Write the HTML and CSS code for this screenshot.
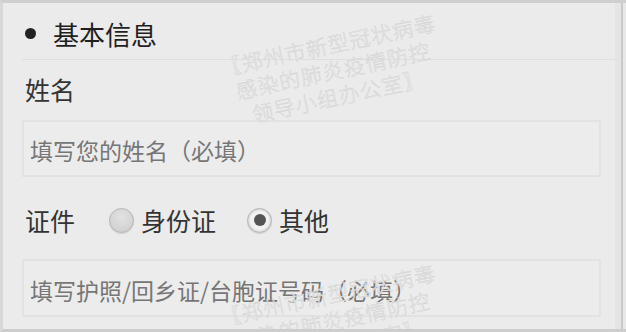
FILE: index.html
```html
<!DOCTYPE html>
<html lang="zh-CN">
<head>
<meta charset="utf-8">
<link rel="stylesheet" href="styles.css">
</head>
<body>
<div class="screen">
  <div class="section-head">
    <span class="bullet"></span>
    <span class="section-title">基本信息</span>
  </div>
  <div class="field-label">姓名</div>
  <div class="input-box"><span class="placeholder">填写您的姓名（必填）</span></div>
  <div class="radio-row">
    <span class="radio-label">证件</span>
    <span class="radio"></span>
    <span class="radio-text">身份证</span>
    <span class="radio checked"><span class="dot"></span></span>
    <span class="radio-text">其他</span>
  </div>
  <div class="input-box second"><span class="placeholder">填写护照/回乡证/台胞证号码（必填）</span></div>

  <div class="watermark wm-top">【郑州市新型冠状病毒<br>感染的肺炎疫情防控<br>领导小组办公室】</div>
  <div class="watermark wm-bottom">【郑州市新型冠状病毒<br>感染的肺炎疫情防控<br>领导小组办公室】</div>
</div>
</body>
</html>
```

FILE: styles.css
```css
html, body {
  margin: 0;
  padding: 0;
  background: #ebebeb;
}

.screen {
  position: relative;
  width: 626px;
  height: 332px;
  box-sizing: border-box;
  overflow: hidden;
  border-top: 3px solid #cfcfcf;
  border-left: 3px solid #d8d8d8;
  border-bottom: 3px solid #cdcdcd;
  padding-left: 19px;
  padding-right: 24px;
  background: linear-gradient(to right, #ebebeb 0, #ebebeb 612px, #e5e5e5 612px, #e5e5e5 618px, #c9c9c9 618px, #c9c9c9 620px, #e8e8e8 620px);
  font-family: "Noto Sans CJK SC", "Noto Sans", sans-serif;
}

.section-head {
  display: flex;
  align-items: center;
  height: 57px;
  box-sizing: border-box;
  padding-top: 14px;
  padding-bottom: 9px;
  border-bottom: 1px solid #dedede;
  margin-right: -20px;
}

.bullet {
  width: 11px;
  height: 11px;
  border-radius: 50%;
  background: #222;
  margin-left: 3px;
  margin-right: 17px;
}

.section-title {
  font-size: 26px;
  line-height: 34px;
  color: #1f1f1f;
}

.field-label {
  font-size: 25px;
  line-height: 34px;
  color: #333;
  padding-left: 3px;
  margin-top: 12px;
  margin-bottom: 14px;
}

.input-box {
  height: 57px;
  box-sizing: border-box;
  border: 2px solid #e2e2e2;
  background: #ececec;
  display: flex;
  align-items: center;
  padding-top: 3px;
  padding-left: 6px;
  margin-right: 1px;
}

.input-box.second {
  height: 58px;
  margin-top: 22px;
  padding-top: 4px;
}

.placeholder {
  font-size: 23px;
  line-height: 30px;
  color: #767676;
}

.radio-row {
  display: flex;
  align-items: center;
  height: 34px;
  margin-top: 26px;
  padding-left: 3px;
  font-size: 25px;
  line-height: 34px;
  color: #333;
}

.radio-label {
  margin-right: 34px;
}

.radio {
  width: 25px;
  height: 25px;
  box-sizing: border-box;
  border-radius: 50%;
  border: 1px solid #b5b5b5;
  background: radial-gradient(circle at 50% 35%, #e2e2e2 0, #d6d6d6 55%, #c9c9c9 100%);
  box-shadow: 0 1px 1px rgba(0, 0, 0, 0.12);
  margin-right: 7px;
  display: flex;
  align-items: center;
  justify-content: center;
}

.radio.checked {
  background: radial-gradient(circle, #f2f2f2 0, #f2f2f2 55%, #cfcfcf 75%, #c4c4c4 100%);
}

.radio .dot {
  width: 12px;
  height: 12px;
  border-radius: 50%;
  background: #555;
}

.radio-text {
  margin-right: 31px;
}

.watermark {
  position: absolute;
  left: 210px;
  width: 240px;
  text-align: center;
  font-size: 21px;
  font-weight: 300;
  line-height: 26px;
  letter-spacing: 1px;
  color: #e5e5e5;
  -webkit-text-stroke: 0.35px #d0d0d0;
  transform: rotate(-12deg);
  white-space: nowrap;
  pointer-events: none;
}

.wm-top {
  top: 28px;
}

.wm-bottom {
  top: 278px;
}
```
